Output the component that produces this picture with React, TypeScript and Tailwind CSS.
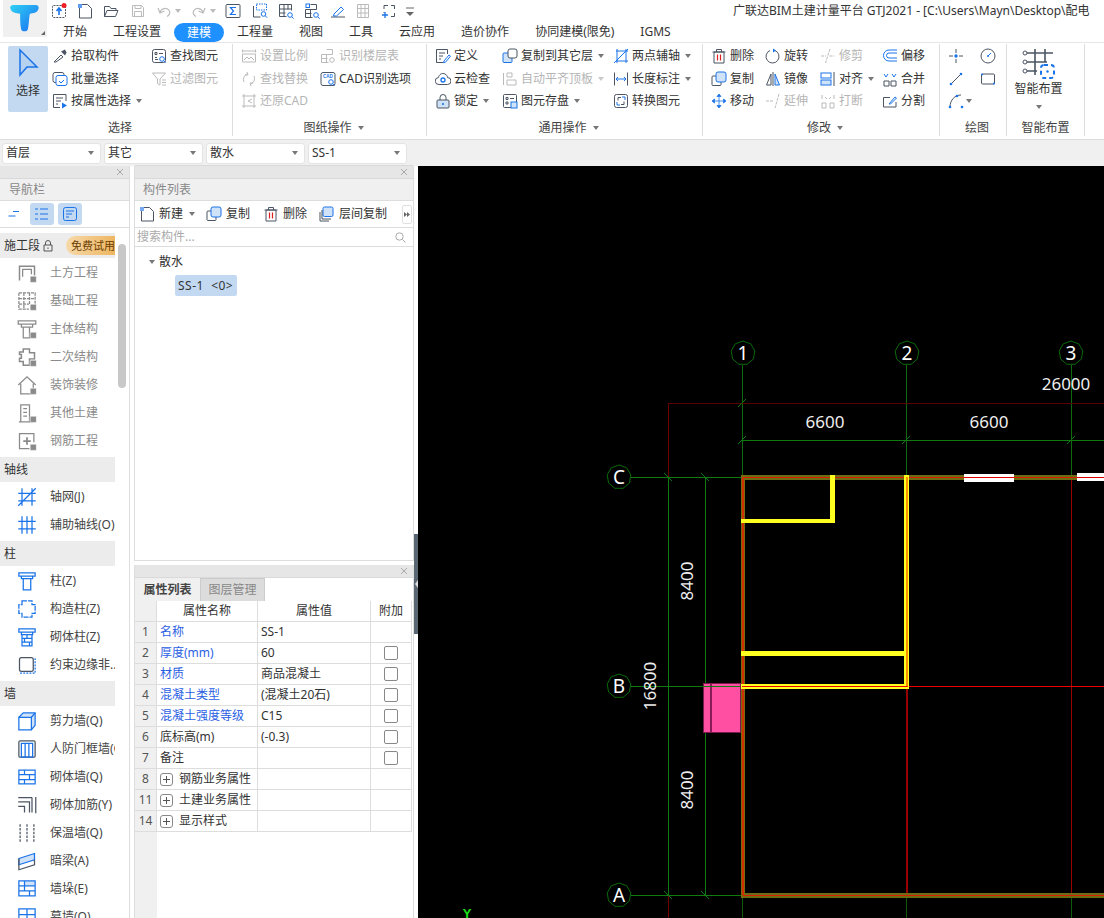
import type { ReactNode } from "react"

const D = "#4b5563"
const B = "#1a73e8"
const L = "#cfe2f8"
const G = "#8a8a8a"

const S = ({ d, c = D, f = "none" }: { d: string; c?: string; f?: string }) => <path d={d} stroke={c} fill={f} />
const Loupe = ({ x = 11, y = 11 }: { x?: number; y?: number }) => (
    <g>
        <circle cx={x} cy={y} r="2.3" stroke={B} fill="#fff" />
        <path d={`M${x + 1.7} ${y + 1.7}l2 2`} stroke={B} />
    </g>
)
const VBadge = () => <rect x="10.5" y="10.5" width="5" height="5" rx="0.5" fill="#8a8a8a" stroke="#fff" strokeWidth="0.5" />

const icons: Record<string, ReactNode> = {
    upload: <><rect x="1.5" y="2.5" width="13" height="12" rx="1" stroke={D} fill="none" strokeDasharray="2 1" /><path d="M8 12V6M5.5 8 8 5l2.5 3" stroke={B} strokeWidth="1.6" fill="none" /><circle cx="13" cy="2.5" r="2.5" fill="#ee1c25" /></>,
    newfile: <><S d="M2.5 5v10h12V5.5L10.5 1.5H5" /><rect x="1" y="1" width="4" height="4" fill={B} opacity="0.7" /></>,
    folder: <><S d="M1.5 13.5v-10h5l1.5 2h5v2" /><S d="M1.5 13.5l2.5-6h11l-2.5 6z" /></>,
    save: <><path d="M2.5 2.5h9l2 2v9h-11z" stroke="#bbb" fill="none" /><path d="M5 2.5v3h6v-3M4.5 13.5v-5h7v5" stroke="#bbb" fill="none" /></>,
    undo: <path d="M4 9.5C5 5 11 4 13.5 8c1 2-.5 4.5-2.5 5.5M2 5l2 5 4.5-2" stroke="#bbb" fill="none" strokeWidth="1.2" />,
    redo: <path d="M12 9.5C11 5 5 4 2.5 8c-1 2 .5 4.5 2.5 5.5M14 5l-2 5-4.5-2" stroke="#bbb" fill="none" strokeWidth="1.2" />,
    sigma: <><rect x="1" y="1.5" width="14" height="13" rx="1" stroke={D} fill="none" /><path d="M11 4.5H5.5L8.5 8l-3 3.5H11" stroke={B} fill="none" strokeWidth="1.2" /></>,
    report: <><S d="M1.5 3v11h7" /><rect x="4.5" y="1" width="10" height="6" stroke={B} fill="none" strokeDasharray="1.5 1" /><Loupe x={11.5} y={11} /></>,
    gridq: <><S d="M1.5 1.5h12v6M1.5 1.5v12h7M1.5 6h12M6 1.5v12M10 1.5v5M1.5 10h6" /><Loupe x={12} y={12} /></>,
    floorq: <><S d="M1.5 6.5h11M1.5 6.5v8h7M1.5 10.5h6M6.5 6.5v8M6.5 1.5h6v5" /><rect x="2" y="1" width="3.5" height="3.5" stroke={B} fill="none" /><Loupe x={12} y={12} /></>,
    edit: <><S d="M1 14h14" c={D} /><path d="M4 11l7-7 2.5 2.5-7 6.5H3.5z" stroke={B} fill="none" /></>,
    film: <path d="M2.5 1.5v13M13.5 1.5v13M2.5 1.5h11M2.5 14.5h11M6 1.5v13M10 1.5v13M2.5 5.5h11M2.5 10h11" stroke="#bbb" fill="none" />,
    addbox: <><path d="M3 6V2.5h4M10 2.5h3.5V6M13.5 10v3.5H10M3 9v1" stroke={D} fill="none" /><path d="M1 12h6M4 9v6" stroke={B} strokeWidth="1.3" /></>,
    more: <><path d="M3 5h8" stroke="#666" /><path d="M3 9h8l-4 4z" fill="#666" /></>,
    picker: <><path d="M2 14l7-7 2 2-7 5z" stroke={D} fill="none" /><path d="M9 3.5l4 4 1.5-3-1.5-3z" fill={D} /></>,
    batch: <><rect x="1" y="1.5" width="11" height="10" rx="2" stroke={D} fill="none" /><rect x="4" y="4.5" width="11" height="10" rx="2" stroke={B} fill="#fff" /><path d="M7 10l2 2 3-3" stroke={B} fill="none" /></>,
    attr: <><S d="M14 8V1.5H1.5v13H8" /><S d="M4 5h7M4 8h5M4 11h2" /><path d="M10 9.5l5 3-5 3z" fill={B} /></>,
    findel: <><rect x="1.5" y="1.5" width="13" height="13" rx="2" stroke={D} fill="none" /><S d="M4 4.5h2v2H4zM8 5.5h4M4 9.5h2M4 11.5h3" /><Loupe x={11} y={11} /></>,
    filter: <><path d="M1.5 2h13L9 8v6l-2.5-1.5V8z" stroke="#bbb" fill="none" /><path d="M11 9h4M11 11.5h4M11 14h4" stroke="#bbb" /></>,
    scale: <><path d="M1.5 1.5v3M14.5 1.5v3M1.5 3h13M1.5 6h13v8h-13zM3 12l3-3 2 2 2-2 3 3" stroke="#bbb" fill="none" /></>,
    floor: <><path d="M1.5 6.5h11M1.5 6.5v8h7M1.5 10.5h6M6.5 6.5v8M6.5 1.5h6v5" stroke="#bbb" fill="none" /><circle cx="12" cy="12" r="2.3" stroke="#bbb" fill="none" /></>,
    swap: <path d="M3 11a6 6 0 0 1 3-8M13 5a6 6 0 0 1-3 8M6 1l1 3-3 0M10 15l-1-3 3 0" stroke="#bbb" fill="none" />,
    restore: <path d="M1 3h14M1 13h14M3 1v14M13 1v14M11 6 7 8l4 2" stroke="#bbb" fill="none" />,
    cad: <><rect x="1" y="1.5" width="14" height="13" rx="2" stroke={D} fill="none" /><text x="3" y="7" fontSize="4.5" fill={B} fontWeight="700" fontFamily="Liberation Sans">CAD</text><Loupe x={11} y={11} /></>,
    define: <><S d="M12.5 6V1.5h-11v13h7" /><S d="M4 5h6M4 8h4M4 11h2" /><path d="M9 13l5-6 1.5 1.2-5 6-2 .5z" stroke={B} fill="#fff" /></>,
    cloud: <><path d="M4 13.5a3.5 3.5 0 0 1-.5-7C4 3.5 7 1.5 10 3c2 1 2.5 2.5 2.5 3.5a3.5 3.5 0 0 1 0 7z" stroke={D} fill="none" /><circle cx="8" cy="9" r="2" stroke={B} fill="none" strokeWidth="1.3" /></>,
    lock: <><path d="M5 7V4.5a3 3 0 0 1 6 0V7" stroke={D} fill="none" /><rect x="2" y="7" width="12" height="8" rx="1" stroke={D} fill={L} /><circle cx="8" cy="11" r="1.1" fill={B} /></>,
    copyto: <><rect x="1" y="5" width="9" height="9.5" rx="1" stroke={B} fill={L} /><rect x="6" y="1" width="9" height="9" rx="2" stroke={D} fill="#fff" /></>,
    align: <><path d="M1.5 2v12M5 2h5v4H5zM5 9h9v5H5z" stroke="#bbb" fill="none" /></>,
    store: <><rect x="1.5" y="1.5" width="13" height="13" rx="1" stroke={D} fill="none" /><S d="M4 4.5h2v2H4zM8 5.5h4M4 9h2v2H4z" /><rect x="9" y="9" width="6" height="6" fill={L} stroke={B} /></>,
    twoaxis: <path d="M3 3h12M3 13h12M4 1v14M13 1v14M1 15 15 1" stroke={B} fill="none" />,
    lengthd: <><S d="M1.5 1.5v13M14.5 1.5v13" /><path d="M3 8h10M3 8l2-2M3 8l2 2M13 8l-2-2M13 8l-2 2" stroke={B} fill="none" /></>,
    convert: <><rect x="1.5" y="1.5" width="13" height="13" rx="2" stroke={D} fill="none" /><path d="M8 4.5H5v3M11 8.5v3H8" stroke={D} fill="none" /><path d="M9 4h3v3M4 9v3h3" stroke={B} fill="none" /></>,
    del: <><path d="M3 4h10v11H3zM1.5 4h13M5.5 4V1.5h5V4" stroke={D} fill="none" /><path d="M6.5 6.5v6M9.5 6.5v6" stroke="#e02020" strokeWidth="1.2" /></>,
    copy: <><rect x="1" y="5" width="9" height="9.5" rx="1" stroke={D} fill="#fff" /><rect x="5" y="1" width="10" height="10" rx="2" stroke={B} fill={L} /></>,
    move: <path d="M8 4v8M4 8h8M8 1l-2 2.5h4zM8 15l-2-2.5h4zM1 8l2.5-2v4zM15 8l-2.5-2v4z" stroke={B} fill={B} strokeWidth="0.8" />,
    rotate: <><path d="M10 2.5A6.5 6.5 0 1 1 5 2.5" stroke={D} fill="none" /><path d="M8 .5l3 2-3 2z" fill={B} /></>,
    mirror: <><path d="M8 1v14" stroke={D} /><path d="M6 3v11H1.5z" stroke={D} fill="none" /><path d="M10 3v11h4.5z" stroke={B} fill={L} /></>,
    trim: <path d="M1 8h5M9.5 8h5M10 1 5.5 15" stroke="#bbb" fill="none" strokeDasharray="3 1" />,
    extend: <path d="M1 8h8M14 1 10 15" stroke="#bbb" fill="none" strokeDasharray="3 1" />,
    alignb: <><rect x="1" y="2" width="10" height="5" stroke={B} fill="none" /><rect x="1" y="9" width="10" height="5" stroke={B} fill={L} /><path d="M14 1v14" stroke={D} /></>,
    breakb: <><path d="M2 10h4v5H2zM10 10h4v5h-4zM2 6V2M14 6V2M5 4l2 2M11 4 9 6" stroke="#bbb" fill="none" /></>,
    offset: <path d="M15 2H7a5.5 5.5 0 0 0 0 11h8M15 5H7a2.5 2.5 0 0 0 0 5h8" stroke={B} fill="none" />,
    merge: <><path d="M2 10h5v5H2zM9 10h5v5H9z" stroke={D} fill="none" /><path d="M2 3l2 3 2-3M10 3l2 3 2-3" stroke={B} fill="none" /></>,
    split: <><path d="M14 9v5H1.5V4.5H8" stroke={D} fill="none" /><path d="M7 11l6-7 1.5 1-6 6z" stroke={B} fill="none" /></>,
    point: <><path d="M8 1v4M8 11v4M1 8h4M11 8h4" stroke={D} /><circle cx="8" cy="8" r="1.7" fill={B} /></>,
    gauge: <><circle cx="8" cy="8" r="7" stroke={D} fill="none" /><path d="M8 8l3-3" stroke={B} /><circle cx="8" cy="8" r="1" fill={B} /></>,
    line: <><path d="M3 13 13 3" stroke={D} /><circle cx="3" cy="13" r="1.3" fill={B} /><circle cx="13" cy="3" r="1.3" fill={B} /></>,
    rect: <><rect x="1.5" y="3" width="13" height="10" rx="1" stroke={D} fill="none" /><circle cx="2" cy="3.5" r="1" fill={B} /><circle cx="14" cy="12.5" r="1" fill={B} /></>,
    arc: <><path d="M2 14C2 7 7 2 13 2" stroke={D} fill="none" /><circle cx="2" cy="14" r="1.3" fill={B} /><circle cx="9" cy="3" r="1.3" fill={B} /><circle cx="14" cy="14" r="1.3" fill={B} /></>,
    navdash: <path d="M7 5.5h6M2.5 10h7" stroke={B} />,
    navlist: <><path d="M6 3h8M6 8h8M6 13h8" stroke={B} /><path d="M1.5 3h2M1.5 8h2M1.5 13h2" stroke={B} strokeWidth="2" strokeDasharray="1 0.5" /></>,
    navform: <><rect x="1.5" y="1.5" width="13" height="13" rx="2" stroke={B} fill="none" /><path d="M4 5h8M4 8h6M4 11h3" stroke={B} /></>,
    nEarth: <><path d="M2 14V2.5h12V10" stroke={G} strokeWidth="1.2" fill="none" /><path d="M4.5 11V5h7v4" stroke={G} fill="none" /><VBadge /></>,
    nFound: <><path d="M1.5 1.5h13v9M1.5 1.5v13h8M1.5 6h13M1.5 10.5h8M5.5 1.5v13M10 1.5v9" stroke={G} fill="none" strokeDasharray="2.5 .7" /><VBadge /></>,
    nMain: <><path d="M1 1.5h14V4H1zM3.5 4v2.5h9V4M5 6.5V15h5V6.5" stroke={G} fill="none" /><VBadge /></>,
    nSecond: <><path d="M5 1.5h5v3h4v5h-4v5H5v-3H2V9h1.5V6H2V4h3z" stroke={G} fill="none" strokeWidth="1.2" /><VBadge /></>,
    nDeco: <><path d="M1 8 8 1.5 15 8M3 7v8h10V7" stroke={G} fill="none" /><VBadge /></>,
    nOther: <><path d="M3 15V1.5h7V15M5 4.5h3M5 7.5h3M5 10.5h3M1.5 15H14" stroke={G} fill="none" /><VBadge /></>,
    nRebar: <><path d="M13.5 9V2H2v12h8" stroke={G} fill="none" /><path d="M5 8h6M8 5v6" stroke={G} strokeWidth="1.4" fill="none" /><VBadge /></>,
    axisnet: <path d="M1 5h14M1 11h14M4 1v14M12 1v14M1 15 15 1" stroke={B} fill="none" />,
    subaxis: <path d="M1 5h14M1 11h14M4 1v14M8 1v14M12 1v14" stroke={B} fill="none" />,
    col: <path d="M1.5 1.5h13V4h-13zM3.5 4v2h9V4M5 6v9h6V6" stroke={B} fill="none" />,
    cons: <path d="M4 1.5h8v3h2.5v7H12v3H4v-3H1.5v-7H4z" stroke={B} fill="none" strokeDasharray="4 .8" />,
    brick: <path d="M1.5 1.5h13V4h-13zM3.5 4v2h9V4M4 6v9h8V6M4 9h8M4 12h8M8 6v3M6 9v3M10 12v3" stroke={B} fill="none" />,
    edge: <><rect x="2" y="2" width="11" height="11" rx="1.5" stroke={D} fill="none" /><path d="M14.5 2.5v12M2.5 14.5h12" stroke={B} strokeDasharray="1.5 1" /></>,
    shear: <><path d="M1.5 5 5 1.5h9.5v10L11.5 15" stroke={B} fill={L} /><path d="M11.5 5 14.5 1.5" stroke={B} /><path d="M1.5 5h10v10h-10z" stroke={B} fill="#fff" /></>,
    door: <><rect x="1.5" y="1.5" width="13" height="13" rx="1" stroke={D} fill="none" /><path d="M3.5 3.5h9v11h-9zM6.5 3.5v11M9.5 3.5v11" stroke={B} fill="none" /></>,
    wall: <path d="M1.5 2.5h13v11h-13zM1.5 6h13M1.5 10h13M6 2.5V6M10 6v4M6 10v3.5" stroke={B} fill="none" />,
    wallr: <><path d="M15 1.5v13M1 2h11M1 5.5h9V14M1 9h5v5M12 2v12" stroke={D} fill="none" /></>,
    insul: <path d="M2.5 1v14M13.5 1v14M8 1v14" stroke={D} strokeDasharray="2 1" />,
    hide: <><path d="M1.5 6 14 2v5L1.5 11z" stroke={B} fill={L} /><path d="M1.5 6v9L14 11V7" stroke={D} fill="none" /></>,
    pier: <><rect x="6" y="1.5" width="8.5" height="4" fill={L} /><path d="M1.5 1.5h13v12h-13zM1.5 5.5h13M1.5 9.5h13M6 1.5v8M10 9.5v4" stroke={B} fill="none" /></>,
    curtain: <path d="M1.5 1.5h13v13h-13zM1.5 6h13M8 1.5V15" stroke={B} fill="none" />,
    copyf: <><rect x="4" y="1" width="10" height="9.5" rx="1.5" stroke={B} fill={L} /><path d="M3 4v9h9M1 6v9h9" stroke={D} fill="none" /></>,
    newf: <><S d="M2.5 5v10h12V5.5L10.5 1.5H5" /><rect x="1" y="1" width="4" height="4" fill={B} opacity="0.6" /></>,
}

const Icon = ({ name, size = 16 }: { name: string; size?: number }) => (
    <svg width={size} height={size} viewBox="0 0 16 16" className="shrink-0">
        {icons[name]}
    </svg>
)

const Caret = ({ className = "ml-1" }: { className?: string }) => (
    <span className={`inline-block shrink-0 w-0 h-0 border-x-[3px] border-t-[4px] border-x-transparent border-t-[#777] ${className}`}></span>
)

type Item = { icon: string; label: string; caret?: boolean; off?: boolean }

const RibbonItem = ({ icon, label, caret, off }: Item) => (
    <div className="h-[22.5px] flex items-center whitespace-nowrap">
        <Icon name={icon} />
        <span className={`ml-[3px] ${off ? "text-[#b5b5b5]" : "text-[#333]"}`}>{label}</span>
        {caret && <Caret className={off ? "ml-[5px] opacity-40" : "ml-[5px]"} />}
    </div>
)

const Col = ({ width, items }: { width: number; items: Item[] }) => (
    <div style={{ width }} className="shrink-0 flex flex-col">
        {items.map((it) => (
            <RibbonItem key={it.label} {...it} />
        ))}
    </div>
)

const GroupLabel = ({ label, caret }: { label: string; caret?: boolean }) => (
    <div className="h-4 mt-auto flex items-center justify-center text-[#444]">
        {label}
        {caret && <Caret className="ml-[6px]" />}
    </div>
)

const Ribbon = () => (
    <div className="h-[97px] flex border-t border-[#e6e6e6] bg-white text-[12px]">
        {/* 选择 */}
        <div className="w-[233px] flex flex-col pl-2 pt-px mt-px mb-[3px] border-r border-[#ddd]">
            <div className="flex">
                <div className="w-10 h-[66px] mr-1 mt-px bg-[#c2d9f1] rounded-[2px] flex flex-col items-center pt-[2px]">
                    <svg width="24" height="30" viewBox="0 0 24 30">
                        <path d="M4 2v25l7-8h10z" fill="#b6d2f0" stroke={B} strokeWidth="1.5" />
                    </svg>
                    <span className="mt-[4px] text-[#333]">选择</span>
                </div>
                <Col width={99} items={[{ icon: "picker", label: "拾取构件" }, { icon: "batch", label: "批量选择" }, { icon: "attr", label: "按属性选择", caret: true }]} />
                <Col width={80} items={[{ icon: "findel", label: "查找图元" }, { icon: "filter", label: "过滤图元", off: true }]} />
            </div>
            <GroupLabel label="选择" />
        </div>
        {/* 图纸操作 */}
        <div className="w-[194px] flex flex-col pl-2 pt-px mt-px mb-[3px] border-r border-[#ddd]">
            <div className="flex">
                <Col width={79} items={[{ icon: "scale", label: "设置比例", off: true }, { icon: "swap", label: "查找替换", off: true }, { icon: "restore", label: "还原CAD", off: true }]} />
                <Col width={100} items={[{ icon: "floor", label: "识别楼层表", off: true }, { icon: "cad", label: "CAD识别选项" }]} />
            </div>
            <GroupLabel label="图纸操作" caret />
        </div>
        {/* 通用操作 */}
        <div className="w-[276px] flex flex-col pl-2 pt-px mt-px mb-[3px] border-r border-[#ddd]">
            <div className="flex">
                <Col width={67} items={[{ icon: "define", label: "定义" }, { icon: "cloud", label: "云检查" }, { icon: "lock", label: "锁定", caret: true }]} />
                <Col width={111} items={[{ icon: "copyto", label: "复制到其它层", caret: true }, { icon: "align", label: "自动平齐顶板", caret: true, off: true }, { icon: "store", label: "图元存盘", caret: true }]} />
                <Col width={85} items={[{ icon: "twoaxis", label: "两点辅轴", caret: true }, { icon: "lengthd", label: "长度标注", caret: true }, { icon: "convert", label: "转换图元" }]} />
            </div>
            <GroupLabel label="通用操作" caret />
        </div>
        {/* 修改 */}
        <div className="w-[237px] flex flex-col pl-2 pt-px mt-px mb-[3px] border-r border-[#ddd]">
            <div className="flex">
                <Col width={54} items={[{ icon: "del", label: "删除" }, { icon: "copy", label: "复制" }, { icon: "move", label: "移动" }]} />
                <Col width={55} items={[{ icon: "rotate", label: "旋转" }, { icon: "mirror", label: "镜像" }, { icon: "extend", label: "延伸", off: true }]} />
                <Col width={62} items={[{ icon: "trim", label: "修剪", off: true }, { icon: "alignb", label: "对齐", caret: true }, { icon: "breakb", label: "打断", off: true }]} />
                <Col width={52} items={[{ icon: "offset", label: "偏移" }, { icon: "merge", label: "合并" }, { icon: "split", label: "分割" }]} />
            </div>
            <GroupLabel label="修改" caret />
        </div>
        {/* 绘图 */}
        <div className="w-[67px] flex flex-col pl-2 pt-px mt-px mb-[3px] border-r border-[#ddd]">
            <div className="grid grid-cols-[32px_16px] auto-rows-[22.5px] items-center">
                <Icon name="point" />
                <Icon name="gauge" />
                <Icon name="line" />
                <Icon name="rect" />
                <div className="flex items-center">
                    <Icon name="arc" />
                    <Caret className="ml-[2px]" />
                </div>
            </div>
            <GroupLabel label="绘图" />
        </div>
        {/* 智能布置 */}
        <div className="w-[78px] flex flex-col mt-px mb-[3px] border-r border-[#ddd]">
            <div className="flex flex-col items-center pt-[4px] mr-[14px]">
                <svg width="34" height="32" viewBox="0 0 34 32">
                    <path d="M3 5h28M3 14h22M3 23h12M13 1v26M23 1v13" stroke={D} strokeWidth="1.6" fill="none" />
                    <circle cx="3" cy="5" r="2" stroke={D} fill="#fff" />
                    <circle cx="3" cy="14" r="2" stroke={D} fill="#fff" />
                    <circle cx="3" cy="23" r="2" stroke={D} fill="#fff" />
                    <rect x="19" y="17" width="13" height="13" rx="3" stroke={B} strokeWidth="2" strokeDasharray="4 3" fill="#fff" />
                    <circle cx="25.5" cy="23.5" r="1.2" fill={B} />
                </svg>
                <span className="text-[#333]">智能布置</span>
                <Caret className="mt-[7px] ml-0" />
            </div>
            <GroupLabel label="智能布置" />
        </div>
    </div>
)

const quick: [string, number, boolean][] = [
    ["upload", 4, false], ["newfile", 10, false], ["folder", 10, false], ["save", 11, false], ["undo", 10, true], ["redo", 10, true], ["sigma", 9, false], ["report", 11, false], ["gridq", 10, false], ["floorq", 10, false], ["edit", 10, false], ["film", 9, false], ["addbox", 10, false], ["more", 6, false],
]
const tabs = ["开始", "工程设置", "建模", "工程量", "视图", "工具", "云应用", "造价协作", "协同建模(限免)", "IGMS"]

const TopBar = () => (
    <div className="h-[42px] flex bg-white text-[12px] text-[#333] overflow-hidden">
        <div className="w-[44px] ml-[3px] h-[37px] bg-[#f0f0f0] shrink-0 relative flex items-center justify-center pr-[2px]">
            <svg width="30" height="29" viewBox="0 0 30 30">
                <defs>
                    <linearGradient id="logo" x1="0" y1="0" x2="1" y2="1">
                        <stop offset="0" stopColor="#2fd0f5" />
                        <stop offset="1" stopColor="#1a6df0" />
                    </linearGradient>
                </defs>
                <path d="M3 1h24a3 3 0 0 1 3 4c-1 4-5 5-9 5-1 6-1 12-2 16-1 3-6 3-7 0-1-5-1-10-1-16-4 0-9-1-10-5a3 3 0 0 1 2-4z" fill="url(#logo)" />
            </svg>
            <svg width="4" height="4" viewBox="0 0 4 4" className="absolute right-[2px] bottom-[2px]">
                <path d="M4 0v4H0z" fill="#666" />
            </svg>
        </div>
        <div className="flex-1 min-w-0 flex flex-col">
            <div className="h-[22px] flex items-center">
                <div className="w-[686px] shrink-0 flex items-center">
                    {quick.map(([name, gap, caret]) => (
                        <span key={name} style={{ marginLeft: gap }} className="flex items-center">
                            <Icon name={name} />
                            {caret && <Caret className="ml-[3px] opacity-50" />}
                        </span>
                    ))}
                </div>
                <span className="whitespace-nowrap text-[12px] text-[#333]">广联达BIM土建计量平台 GTJ2021 - [C:\Users\Mayn\Desktop\配电</span>
            </div>
            <div className="h-5 flex items-center gap-[26px] pl-[16px] whitespace-nowrap">
                {tabs.map((t) =>
                    t === "建模" ? (
                        <span key={t} className="bg-[#1e90ff] text-white rounded-full px-[13px] -mx-[13px] h-[19px] leading-[19px]">{t}</span>
                    ) : (
                        <span key={t}>{t}</span>
                    ),
                )}
            </div>
        </div>
    </div>
)

const SelectBox = ({ label }: { label: string }) => (
    <div className="w-[99px] h-[21px] bg-white rounded-[3px] border border-[#e4e4e4] flex items-center justify-between pl-[3px] pr-[6px] text-[12px] text-[#333]">
        {label}
        <Caret className="" />
    </div>
)

const Closer = () => (
    <div className="h-3 bg-[#e6e6e6] border-y border-[#d9d9d9] flex items-center justify-end pr-[5px] text-[#aaa] box-content -mt-px">
        <svg width="8" height="8" viewBox="0 0 8 8">
            <path d="M1 1l6 6M7 1 1 7" stroke="#aaa" />
        </svg>
    </div>
)

const Band = ({ children }: { children: ReactNode }) => (
    <div className="h-[25px] w-[115px] bg-[#ececec] flex items-center pl-[4px] text-[#333] whitespace-nowrap overflow-hidden">{children}</div>
)

const NavRow = ({ icon, label, off }: { icon: string; label: string; off?: boolean }) => (
    <div className="h-7 w-[115px] flex items-center pl-[17px] whitespace-nowrap overflow-hidden">
        <Icon name={icon} size={20} />
        <span className={`ml-[13px] ${off ? "text-[#8a8a8a]" : "text-[#444]"}`}>{label}</span>
    </div>
)

const NavPanel = () => (
    <div className="w-[130px] shrink-0 border-r border-[#ddd] relative text-[12px] overflow-hidden">
        <Closer />
        <div className="h-[22px] bg-[#f0f0f0] border-b border-[#ddd] flex items-center pl-[9px] text-[#888]">导航栏</div>
        <div className="h-[27px] border-b border-[#ddd] flex items-center pl-[2px]">
            <span className="w-6 h-6 flex items-center justify-center"><Icon name="navdash" /></span>
            <span className="w-6 h-[22px] ml-[4px] bg-[#c2d9f1] rounded-[3px] flex items-center justify-center"><Icon name="navlist" /></span>
            <span className="w-6 h-[22px] ml-[4px] bg-[#c2d9f1] rounded-[3px] flex items-center justify-center"><Icon name="navform" /></span>
        </div>
        <div className="h-[5px]"></div>
        <Band>
            施工段
            <svg width="10" height="12" viewBox="0 0 10 12" className="ml-[3px] shrink-0">
                <path d="M2.5 5V3a2.5 2.5 0 0 1 5 0v2M1 5h8v6H1zM5 7.5V9" stroke="#555" fill="none" />
            </svg>
            <span className="ml-[13px] shrink-0 h-[19px] leading-[19px] pl-[5px] rounded-l-full bg-gradient-to-r from-[#f6d9a8] to-[#eeb660] text-[#6b3d00] text-[11px]">免费试用</span>
        </Band>
        <div className="mt-px"></div>
        <NavRow icon="nEarth" label="土方工程" off />
        <NavRow icon="nFound" label="基础工程" off />
        <NavRow icon="nMain" label="主体结构" off />
        <NavRow icon="nSecond" label="二次结构" off />
        <NavRow icon="nDeco" label="装饰装修" off />
        <NavRow icon="nOther" label="其他土建" off />
        <NavRow icon="nRebar" label="钢筋工程" off />
        <div className="h-[2px]"></div>
        <Band>轴线</Band>
        <div className="mt-px"></div>
        <NavRow icon="axisnet" label="轴网(J)" />
        <NavRow icon="subaxis" label="辅助轴线(O)" />
        <div className="h-[2px]"></div>
        <Band>柱</Band>
        <div className="mt-px"></div>
        <NavRow icon="col" label="柱(Z)" />
        <NavRow icon="cons" label="构造柱(Z)" />
        <NavRow icon="brick" label="砌体柱(Z)" />
        <NavRow icon="edge" label="约束边缘非.." />
        <div className="h-[2px]"></div>
        <Band>墙</Band>
        <div className="mt-px"></div>
        <NavRow icon="shear" label="剪力墙(Q)" />
        <NavRow icon="door" label="人防门框墙(Q)" />
        <NavRow icon="wall" label="砌体墙(Q)" />
        <NavRow icon="wallr" label="砌体加筋(Y)" />
        <NavRow icon="insul" label="保温墙(Q)" />
        <NavRow icon="hide" label="暗梁(A)" />
        <NavRow icon="pier" label="墙垛(E)" />
        <NavRow icon="curtain" label="幕墙(Q)" />
        {/* scrollbar thumb */}
        <div className="absolute left-[118px] top-[78px] w-2 h-[144px] rounded-full bg-[#c8c8c8]"></div>
    </div>
)

const ToolBtn = ({ icon, label, caret }: { icon: string; label: string; caret?: boolean }) => (
    <div className="flex items-center">
        <Icon name={icon} />
        <span className="ml-[4px]">{label}</span>
        {caret && <Caret className="ml-[6px]" />}
    </div>
)

const ListPanel = () => (
    <div className="h-[395px] border-x border-b border-[#ddd] flex flex-col text-[12px] text-[#333]">
        <Closer />
        <div className="h-[22px] bg-[#f0f0f0] border-b border-[#ddd] flex items-center pl-2 text-[#888]">构件列表</div>
        <div className="h-[27px] border-b border-[#ddd] flex items-center pl-[4px] pr-[1px] whitespace-nowrap">
            <ToolBtn icon="newf" label="新建" caret />
            <span className="ml-[11px]"><ToolBtn icon="copy" label="复制" /></span>
            <span className="ml-[13px]"><ToolBtn icon="del" label="删除" /></span>
            <span className="ml-[12px]"><ToolBtn icon="copyf" label="层间复制" /></span>
            <span className="ml-auto w-[10px] h-[19px] border border-[#e0e0e0] rounded-[2px] flex items-center justify-center">
                <svg width="6" height="5" viewBox="0 0 6 5"><path d="M0 0l3 2.5L0 5zM3 0l3 2.5L3 5z" fill="#666" /></svg>
            </span>
        </div>
        <div className="h-[19px] border-b border-[#ddd] flex items-center justify-between pl-[2px] pr-[7px] text-[#aaa]">
            搜索构件...
            <svg width="11" height="11" viewBox="0 0 11 11"><circle cx="4.5" cy="4.5" r="3.7" stroke="#aaa" fill="none" /><path d="M7.5 7.5 10.5 10.5" stroke="#aaa" /></svg>
        </div>
        <div className="pl-[14px] pt-[5px]">
            <div className="flex items-center h-5">
                <span className="w-0 h-0 border-x-[3px] border-t-[4px] border-x-transparent border-t-[#777] mr-[4px]"></span>
                散水
            </div>
            <div className="ml-[26px] mt-[3px] w-[62px] h-[21px] bg-[#c2d9f1] rounded-[2px] flex items-center pl-[3px] whitespace-pre tracking-[0.5px]">SS-1  &lt;0&gt;</div>
        </div>
    </div>
)

const props: { n: string; name: string; value?: string; blue?: boolean; check?: boolean; plus?: boolean }[] = [
    { n: "1", name: "名称", value: "SS-1", blue: true },
    { n: "2", name: "厚度(mm)", value: "60", blue: true, check: true },
    { n: "3", name: "材质", value: "商品混凝土", blue: true, check: true },
    { n: "4", name: "混凝土类型", value: "(混凝土20石)", blue: true, check: true },
    { n: "5", name: "混凝土强度等级", value: "C15", blue: true, check: true },
    { n: "6", name: "底标高(m)", value: "(-0.3)", check: true },
    { n: "7", name: "备注", check: true },
    { n: "8", name: "钢筋业务属性", plus: true },
    { n: "11", name: "土建业务属性", plus: true },
    { n: "14", name: "显示样式", plus: true },
]

const PropPanel = () => (
    <div className="flex-1 min-h-0 mt-[4px] border-x border-[#ddd] flex flex-col text-[12px] text-[#333] overflow-hidden">
        <Closer />
        <div className="h-[23px] flex shrink-0">
            <div className="w-[65px] bg-[#f0f0f0] flex items-center justify-center font-bold text-[#444]">属性列表</div>
            <div className="w-[65px] bg-[#dcdcdc] border-x border-t border-[#ccc] flex items-center justify-center text-[#888]">图层管理</div>
        </div>
        <div className="grid grid-cols-[22px_101px_113px_41px] auto-rows-[21px]">
            <div className="bg-[#f0f0f0] border-r border-b border-[#ddd]"></div>
            <div className="border-r border-b border-[#ddd] flex items-center justify-center">属性名称</div>
            <div className="border-r border-b border-[#ddd] flex items-center justify-center">属性值</div>
            <div className="border-r border-b border-[#ddd] flex items-center justify-center">附加</div>
            {props.map((p) => (
                <div key={p.n} className="contents">
                    <div className="bg-[#f0f0f0] border-r border-b border-[#ddd] flex items-center justify-center text-[#555]">{p.n}</div>
                    <div className={`border-r border-b border-[#ddd] flex items-center pl-[3px] ${p.blue ? "text-[#2b5fe3]" : ""}`}>
                        {p.plus && (
                            <span className="w-[13px] h-[13px] border border-[#888] rounded-[3px] flex items-center justify-center mr-[6px]">
                                <svg width="7" height="7" viewBox="0 0 7 7"><path d="M3.5 0v7M0 3.5h7" stroke="#555" /></svg>
                            </span>
                        )}
                        {p.name}
                    </div>
                    <div className="border-r border-b border-[#ddd] flex items-center pl-[3px]">{p.value}</div>
                    <div className="border-r border-b border-[#ddd] flex items-center justify-center">
                        {p.check && <span className="w-[14px] h-[14px] border border-[#888] rounded-[2px]"></span>}
                    </div>
                </div>
            ))}
        </div>
        <div className="w-[22px] flex-1 bg-[#f0f0f0]"></div>
    </div>
)

const bubble = (cx: number, cy: number) => {
    const pts: string[] = []
    for (let i = 0; i < 9; i++) {
        const a = (i * 2 * Math.PI) / 9 - Math.PI / 2
        pts.push(`${(cx + 12 * Math.cos(a)).toFixed(1)},${(cy + 12 * Math.sin(a)).toFixed(1)}`)
    }
    return pts.join(" ")
}

const GR = "#0f7a0f"
const DR = "#990000"
const OL = "#6c6c12"
const YE = "#ffff20"

const Tick = ({ x, y }: { x: number; y: number }) => <path d={`M${x - 4} ${y + 4}L${x + 4} ${y - 4}`} stroke={GR} />
const TickB = ({ x, y }: { x: number; y: number }) => <path d={`M${x - 4} ${y - 4}L${x + 4} ${y + 4}`} stroke={GR} />

const Bubble = ({ x, y, t }: { x: number; y: number; t: string }) => (
    <g>
        <polygon points={bubble(x, y)} stroke="#0a6a0a" fill="#000" shapeRendering="geometricPrecision" />
        <text x={x} y={y + 7} textAnchor="middle" fill="#fff" fontSize="19" fontFamily="Noto Sans">{t}</text>
    </g>
)

const DimText = ({ x, y, t, rot }: { x: number; y: number; t: string; rot?: boolean }) => (
    <text x={x} y={y} textAnchor="middle" fill="#eee" fontSize="17" fontFamily="Noto Sans" transform={rot ? `rotate(-90 ${x} ${y})` : undefined}>{t}</text>
)

const Canvas = () => (
    <div className="flex-1 min-w-0 bg-black overflow-hidden">
        <svg width="686" height="752" viewBox="418 166 686 752" shapeRendering="crispEdges">
            {/* axis lines */}
            <path d="M742.5 365V477M906.5 365V477M1071.5 365V477" stroke="#0d6b0d" />
            <path d="M631 477.5H742M631 686.5H742M631 895.5H742" stroke={GR} />
            <path d="M668.5 477V895M705.5 477V895" stroke={GR} />
            <path d="M742 440.5H1104" stroke={GR} />
            <path d="M668 403.5H1104" stroke="#560000" />
            <path d="M668.5 403V477M668.5 895V918" stroke="#6e0000" />
            <path d="M742.5 898V918M906.5 898V918M1071.5 898V918" stroke="#0d5a0d" />
            <path d="M1071.5 479V895" stroke={DR} />
            <path d="M906.5 688V893" stroke={DR} strokeWidth="2" />
            <path d="M908 686.5H1104" stroke="#f00000" />
            {/* ticks */}
            <Tick x={742} y={403} />
            <Tick x={742} y={440} />
            <Tick x={906} y={440} />
            <Tick x={1071} y={440} />
            <TickB x={668} y={477} />
            <TickB x={705} y={477} />
            <TickB x={668} y={895} />
            <TickB x={705} y={895} />
            {/* pink slab */}
            <rect x="703" y="683" width="37" height="49" fill="#ff4fa3" stroke="#7a1a4e" />
            <path d="M710.5 683V732" stroke="#8a1a58" strokeWidth="2" />
            <path d="M703 686.5H740" stroke={GR} />
            {/* olive walls */}
            <rect x="741" y="475" width="363" height="5" fill={OL} />
            <rect x="741" y="893" width="363" height="5" fill={OL} />
            <rect x="741" y="475" width="4" height="423" fill="#7a6a10" />
            <path d="M743 477.5H1104M743 895.5H1104" stroke="#d81e00" />
            <rect x="742" y="477" width="2" height="418" fill="#d03000" />
            {/* yellow walls */}
            <path d="M832.5 475V521H741" stroke={YE} strokeWidth="4.5" fill="none" />
            <rect x="741" y="650.5" width="165" height="5" fill={YE} />
            <rect x="741" y="684" width="167" height="5" fill={YE} />
            <rect x="904" y="475" width="5" height="214" fill={YE} />
            <rect x="906" y="477" width="2" height="210" fill="#ff9000" />
            <path d="M742 686.5H908" stroke="#f00000" />
            {/* openings */}
            <rect x="964" y="473.5" width="50" height="8" fill="#fff" />
            <rect x="1077" y="473" width="27" height="8" fill="#fff" />
            <path d="M964 477.5H1014M1077 477.5H1104" stroke="#e00000" />
            {/* bubbles and dimensions */}
            <Bubble x={743} y={353} t="1" />
            <Bubble x={907} y={353} t="2" />
            <Bubble x={1071} y={353} t="3" />
            <Bubble x={619} y={477} t="C" />
            <Bubble x={619} y={686} t="B" />
            <Bubble x={619} y={895} t="A" />
            <DimText x={1066} y={390} t="26000" />
            <DimText x={825} y={428} t="6600" />
            <DimText x={989} y={428} t="6600" />
            <DimText x={693} y={581} t="8400" rot />
            <DimText x={693} y={790} t="8400" rot />
            <DimText x={656} y={686} t="16800" rot />
            <text x="467" y="918" textAnchor="middle" fill="#18e018" fontSize="13" fontWeight="700" fontFamily="Liberation Sans">Y</text>
        </svg>
    </div>
)

export default function App() {
    return (
        <div className="w-[1104px] h-[918px] flex flex-col overflow-hidden bg-white font-['Noto_Sans','Noto_Sans_CJK_SC',sans-serif]">
            <TopBar />
            <Ribbon />
            <div className="h-[27px] bg-[#f0f0f0] border-t border-[#ddd] flex items-center gap-[3px] pl-[2px]">
                <SelectBox label="首层" />
                <SelectBox label="其它" />
                <SelectBox label="散水" />
                <SelectBox label="SS-1" />
            </div>
            <div className="flex-1 min-h-0 flex">
                <NavPanel />
                <div className="w-[280px] shrink-0 ml-1 flex flex-col">
                    <ListPanel />
                    <PropPanel />
                </div>
                {/* splitter */}
                <div className="w-1 shrink-0 bg-white flex items-center">
                    <div className="w-1 h-[100px] bg-[#5a6672] flex items-center justify-center mt-[84px]">
                        <span className="w-0 h-0 border-y-[4px] border-r-[3px] border-y-transparent border-r-[#ddd]"></span>
                    </div>
                </div>
                <Canvas />
            </div>
        </div>
    )
}
